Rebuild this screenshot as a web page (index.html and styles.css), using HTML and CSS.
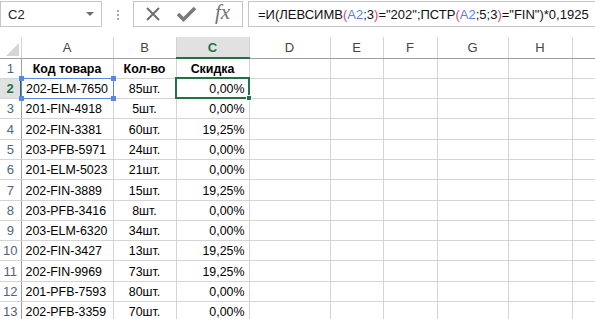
FILE: index.html
```html
<!DOCTYPE html>
<html lang="ru">
<head>
    <meta charset="UTF-8">
    <title>Скидка</title>
    <link rel="stylesheet" href="styles.css">
</head>
<body>

<div class="formula-bar">
    <div class="name-box">
        <span>C2</span>
        <span class="drop"></span>
    </div>
    <div class="grip"><i></i><i></i><i></i></div>
    <div class="buttons">
        <svg class="btn-icon" width="18" height="18" viewBox="0 0 18 18">
            <path d="M3 3 L15 15 M15 3 L3 15" stroke="#6f6f6f" stroke-width="2" fill="none"/>
        </svg>
        <svg class="btn-icon" width="22" height="18" viewBox="0 0 22 18">
            <path d="M3 9 L8.5 14.5 L20 3" stroke="#7a7a7a" stroke-width="3.6" fill="none"/>
        </svg>
        <span class="fx">fx</span>
    </div>
    <div class="formula">=И(ЛЕВСИМВ<b class="p">(</b><b class="ref">A2</b>;3<b class="p">)</b>="202";ПСТР<b class="p">(</b><b class="ref">A2</b>;5;3<b class="p">)</b>="FIN")*0,1925</div>
</div>

<table class="sheet">
    <colgroup>
        <col class="c-head">
        <col class="c-a">
        <col class="c-b">
        <col class="c-c">
        <col class="c-d">
        <col class="c-e">
        <col class="c-f">
        <col class="c-g">
        <col class="c-h">
        <col>
    </colgroup>
    <thead>
        <tr>
            <th class="corner"><div class="corner-tri"></div></th>
            <th>A</th><th>B</th><th class="active">C</th><th>D</th><th>E</th><th>F</th><th>G</th><th>H</th><th></th>
        </tr>
    </thead>
    <tbody>
        <tr class="bold">
            <th>1</th><td class="center">Код товара</td><td class="center">Кол-во</td><td class="center">Скидка</td><td></td><td></td><td></td><td></td><td></td><td></td>
        </tr>
        <tr>
            <th class="active">2</th>
            <td class="range">202-ELM-7650<div class="range-box"><i class="h tl"></i><i class="h tr"></i><i class="h bl"></i><i class="h br"></i></div></td>
            <td class="center">85шт.</td>
            <td class="num selected">0,00%<div class="sel-box"><i class="fill"></i></div></td>
            <td></td><td></td><td></td><td></td><td></td><td></td>
        </tr>
        <tr><th>3</th><td>201-FIN-4918</td><td class="center">5шт.</td><td class="num">0,00%</td><td></td><td></td><td></td><td></td><td></td><td></td></tr>
        <tr><th>4</th><td>202-FIN-3381</td><td class="center">60шт.</td><td class="num">19,25%</td><td></td><td></td><td></td><td></td><td></td><td></td></tr>
        <tr><th>5</th><td>203-PFB-5971</td><td class="center">24шт.</td><td class="num">0,00%</td><td></td><td></td><td></td><td></td><td></td><td></td></tr>
        <tr><th>6</th><td>201-ELM-5023</td><td class="center">21шт.</td><td class="num">0,00%</td><td></td><td></td><td></td><td></td><td></td><td></td></tr>
        <tr><th>7</th><td>202-FIN-3889</td><td class="center">15шт.</td><td class="num">19,25%</td><td></td><td></td><td></td><td></td><td></td><td></td></tr>
        <tr><th>8</th><td>203-PFB-3416</td><td class="center">8шт.</td><td class="num">0,00%</td><td></td><td></td><td></td><td></td><td></td><td></td></tr>
        <tr><th>9</th><td>203-ELM-6320</td><td class="center">34шт.</td><td class="num">0,00%</td><td></td><td></td><td></td><td></td><td></td><td></td></tr>
        <tr><th>10</th><td>202-FIN-3427</td><td class="center">13шт.</td><td class="num">19,25%</td><td></td><td></td><td></td><td></td><td></td><td></td></tr>
        <tr><th>11</th><td>202-FIN-9969</td><td class="center">73шт.</td><td class="num">19,25%</td><td></td><td></td><td></td><td></td><td></td><td></td></tr>
        <tr><th>12</th><td>201-PFB-7593</td><td class="center">80шт.</td><td class="num">0,00%</td><td></td><td></td><td></td><td></td><td></td><td></td></tr>
        <tr><th>13</th><td>202-PFB-3359</td><td class="center">70шт.</td><td class="num">0,00%</td><td></td><td></td><td></td><td></td><td></td><td></td></tr>
    </tbody>
</table>

</body>
</html>
```

FILE: styles.css
```css
* {
    margin: 0;
    padding: 0;
    box-sizing: border-box;
}

body {
    font-family: "Liberation Sans", Arial, sans-serif;
    font-size: 12.4px;
    color: #000;
    background-color: #fff;
    width: 595px;
    height: 319px;
    overflow: hidden;
}

/* formula bar */

.formula-bar {
    display: flex;
    align-items: flex-start;
    height: 37px;
    padding-top: 1px;
}

.name-box {
    display: flex;
    align-items: center;
    justify-content: space-between;
    width: 102px;
    height: 26px;
    padding: 0 7px 0 7px;
    border: 1px solid #c6c6c6;
    font-size: 13px;
    color: #222;
}

.drop {
    width: 0;
    height: 0;
    border-left: 4px solid transparent;
    border-right: 4px solid transparent;
    border-top: 4px solid #6d6d6d;
}

.grip {
    display: flex;
    flex-direction: column;
    gap: 2px;
    width: 31px;
    height: 26px;
    padding: 9px 0 0 15px;
}

.grip i {
    width: 2px;
    height: 2px;
    background-color: #a8a8a8;
}

.buttons {
    display: flex;
    align-items: center;
    width: 110px;
    height: 26px;
    padding-left: 10px;
    gap: 13px;
    border: 1px solid #c6c6c6;
}

.fx {
    font-family: "Liberation Serif", serif;
    font-style: italic;
    font-size: 21px;
    color: #737373;
    margin-left: 5px;
    margin-top: -3px;
}

.formula {
    flex: 1;
    height: 26px;
    margin-left: 5px;
    padding: 5px 0 0 9px;
    border: 1px solid #c6c6c6;
    border-right: none;
    font-size: 13px;
    white-space: nowrap;
    overflow: hidden;
    color: #111;
}

.formula b {
    font-weight: normal;
}

.formula .p {
    color: #e0466d;
}

.formula .ref {
    color: #5b82d6;
}

/* sheet */

.sheet {
    border-collapse: collapse;
    table-layout: fixed;
    width: 620px;
}

.c-head { width: 21px; }
.c-a { width: 92px; }
.c-b { width: 63px; }
.c-c { width: 73px; }
.c-d { width: 81px; }
.c-e { width: 53px; }
.c-f { width: 54px; }
.c-g { width: 71px; }
.c-h { width: 64px; }

.sheet th,
.sheet td {
    height: 20.3px;
    padding: 0 4px 2px 4px;
    border-right: 1px solid #d4d4d4;
    border-bottom: 1px solid #d4d4d4;
    white-space: nowrap;
    overflow: visible;
    vertical-align: bottom;
}

.sheet thead th {
    height: 21px;
    font-weight: normal;
    font-size: 13px;
    color: #444;
    text-align: center;
    vertical-align: middle;
    padding-bottom: 0;
    border-bottom: 1px solid #9f9f9f;
}

.sheet thead th.active {
    background-color: #e1e1e1;
    color: #217346;
    font-weight: bold;
    border-bottom: 2px solid #217346;
}

.sheet tbody th {
    font-weight: normal;
    font-size: 13px;
    color: #50657e;
    text-align: center;
    padding: 0 0 2px 0;
    border-right: 1px solid #9f9f9f;
}

.sheet tbody th.active {
    background-color: #e1e1e1;
    color: #217346;
    font-weight: bold;
    border-right: 2px solid #217346;
}

.sheet thead th.corner {
    padding: 0 2px 2px 0;
    vertical-align: bottom;
}

.corner-tri {
    margin-left: auto;
    width: 0;
    height: 0;
    border-left: 13px solid transparent;
    border-bottom: 13px solid #d6d6d6;
}

.bold td {
    font-weight: bold;
}

.center {
    text-align: center;
}

.num {
    text-align: right;
}

/* selection overlays */

.range,
.selected {
    position: relative;
}

.range-box {
    position: absolute;
    left: -1px;
    top: -1px;
    right: -1px;
    bottom: -1px;
    border: 1px solid #5b86e0;
}

.range-box .h {
    position: absolute;
    width: 5px;
    height: 5px;
    background-color: #5b86e0;
}

.range-box .tl { left: -3px; top: -3px; }
.range-box .tr { right: -3px; top: -3px; }
.range-box .bl { left: -3px; bottom: -3px; }
.range-box .br { right: -3px; bottom: -3px; }

.sel-box {
    position: absolute;
    left: -2px;
    top: -2px;
    right: -1px;
    bottom: -1px;
    border: 2px solid #217346;
}

.sel-box .fill {
    position: absolute;
    right: -4px;
    bottom: -4px;
    width: 6px;
    height: 6px;
    background-color: #217346;
    border: 1px solid #fff;
}
```
